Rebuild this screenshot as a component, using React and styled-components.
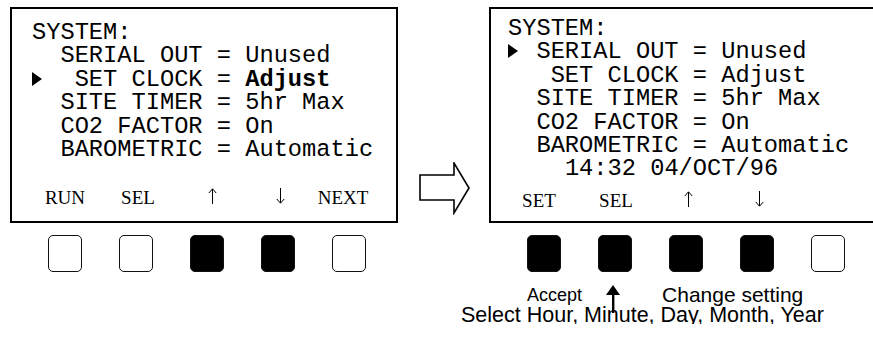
import React from 'react';
import styled, { createGlobalStyle } from 'styled-components';

const Global = createGlobalStyle`
  html, body {
    margin: 0;
    background: #fff;
    overflow: hidden;
  }
`;

const Page = styled.div`
  display: flex;
  align-items: flex-start;
  padding: 7px 0 0 10px;
  width: 900px;
`;

const Panel = styled.div`
  display: flex;
  flex-direction: column;
  width: 388px;
  flex-shrink: 0;
`;

const Screen = styled.div`
  box-sizing: border-box;
  height: 216px;
  border: 2px solid #000;
  padding: ${p => p.$top}px 0 0 ${p => p.$left}px;
`;

const Lines = styled.div`
  font-family: "Liberation Mono", "Courier New", monospace;
  font-size: 23.7px;
  line-height: 23.4px;
  color: #000;
  white-space: pre;
`;

const Line = styled.div``;

const Strong = styled.b`
  font-weight: bold;
`;

const Pointer = styled.span`
  display: inline-block;
  width: 1ch;
`;

const Keys = styled.div`
  display: grid;
  grid-template-columns: repeat(5, 71px);
  margin: ${p => p.$gap}px 0 0 ${p => p.$shift}px;
  font-family: "Liberation Serif", "Times New Roman", serif;
  font-size: 19px;
  line-height: 22px;
  color: #000;
`;

const Key = styled.span`
  display: flex;
  justify-content: center;
  align-items: flex-start;
  transform: translateX(${p => p.$nudge || 0}px);
`;

const KeyArrow = styled.svg`
  margin-top: 1px;
`;

const Buttons = styled.div`
  display: grid;
  grid-template-columns: repeat(5, 71px);
  justify-items: center;
  margin: 12px 0 0 ${p => p.$shift}px;
`;

const Button = styled.div`
  box-sizing: border-box;
  width: 34px;
  height: 37px;
  border: 1.5px solid #111;
  border-radius: 5px;
  background: ${p => (p.$on ? '#000' : '#fff')};
`;

const ArrowSlot = styled.div`
  width: 91px;
  flex-shrink: 0;
  padding: 155px 0 0 21px;
  box-sizing: border-box;
`;

const Caption = styled.div`
  display: flex;
  flex-direction: column;
  margin-top: 14px;
  font-family: "Liberation Sans", Arial, sans-serif;
  line-height: 18px;
  color: #000;
  white-space: nowrap;
`;

const CaptionRow = styled.div`
  display: flex;
  align-items: flex-start;
  height: 18px;
  padding-left: 38px;
`;

const Pick = styled.svg`
  margin: -1px 0 0 ${p => p.$left}px;
  flex-shrink: 0;
`;

const Note = styled.span`
  margin-left: ${p => p.$left || 0}px;
  font-size: ${p => p.$size}px;
`;

const Hint = styled.div`
  margin: 2px 0 0 -28px;
  font-size: 21.5px;
`;

const Triangle = () => (
  <Pointer>
    <svg width="10" height="14" viewBox="0 0 10 14" style={{ verticalAlign: 'baseline' }}>
      <polygon points="0,0 10,7 0,14" fill="#000" />
    </svg>
  </Pointer>
);

const ThinArrow = ({ down }) => (
  <KeyArrow width="9" height="16" viewBox="0 0 9 16">
    <g
      fill="none"
      stroke="#000"
      strokeWidth="1"
      transform={down ? 'rotate(180 4.5 8)' : undefined}
    >
      <line x1="4.5" y1="1" x2="4.5" y2="16" />
      <polyline points="0.8,5 4.5,0.8 8.2,5" />
    </g>
  </KeyArrow>
);

const FlowArrow = () => (
  <svg width="52" height="53" viewBox="0 0 52 53">
    <polygon
      points="1,13 35,13 35,1 50,26 35,51 35,38 1,38"
      fill="#fff"
      stroke="#000"
      strokeWidth="1.6"
    />
  </svg>
);

const Row = ({ pointer, indent, children }) => (
  <Line>
    {pointer ? <Triangle /> : ' '}
    {' '.repeat(indent - 1)}
    {children}
  </Line>
);

const Before = () => (
  <Panel>
    <Screen $top={12} $left={20}>
      <Lines>
        <Line>SYSTEM:</Line>
        <Row indent={2}>SERIAL OUT = Unused</Row>
        <Row indent={3} pointer>SET CLOCK = <Strong>Adjust</Strong></Row>
        <Row indent={2}>SITE TIMER = 5hr Max</Row>
        <Row indent={2}>CO2 FACTOR = On</Row>
        <Row indent={2}>BAROMETRIC = Automatic</Row>
      </Lines>
      <Keys $gap={26} $shift={-2.5}>
        <Key>RUN</Key>
        <Key $nudge={2}>SEL</Key>
        <Key $nudge={5}><ThinArrow /></Key>
        <Key $nudge={2}><ThinArrow down /></Key>
        <Key $nudge={-6}>NEXT</Key>
      </Keys>
    </Screen>
    <Buttons $shift={19.5}>
      <Button />
      <Button />
      <Button $on />
      <Button $on />
      <Button />
    </Buttons>
  </Panel>
);

const After = () => (
  <Panel>
    <Screen $top={8} $left={17}>
      <Lines>
        <Line>SYSTEM:</Line>
        <Row indent={2} pointer>SERIAL OUT = Unused</Row>
        <Row indent={3}>SET CLOCK = Adjust</Row>
        <Row indent={2}>SITE TIMER = 5hr Max</Row>
        <Row indent={2}>CO2 FACTOR = On</Row>
        <Row indent={2}>BAROMETRIC = Automatic</Row>
        <Row indent={4}>14:32 04/OCT/96</Row>
      </Lines>
      <Keys $gap={9} $shift={0.5}>
        <Key $nudge={-5}>SET</Key>
        <Key $nudge={1}>SEL</Key>
        <Key $nudge={2}><ThinArrow /></Key>
        <Key $nudge={2}><ThinArrow down /></Key>
      </Keys>
    </Screen>
    <Buttons $shift={19}>
      <Button $on />
      <Button $on />
      <Button $on />
      <Button $on />
      <Button />
    </Buttons>
    <Caption>
      <CaptionRow>
        <Note $size={18}>Accept</Note>
        <Pick $left={24} width="14" height="28" viewBox="0 0 14 28">
          <polygon points="7,0 14,10 0,10" fill="#000" />
          <rect x="6" y="9" width="2.4" height="19" fill="#000" />
        </Pick>
        <Note $left={42} $size={21}>Change setting</Note>
      </CaptionRow>
      <Hint>Select Hour, Minute, Day, Month, Year</Hint>
    </Caption>
  </Panel>
);

export default function App() {
  return (
    <>
      <Global />
      <Page>
        <Before />
        <ArrowSlot>
          <FlowArrow />
        </ArrowSlot>
        <After />
      </Page>
    </>
  );
}
